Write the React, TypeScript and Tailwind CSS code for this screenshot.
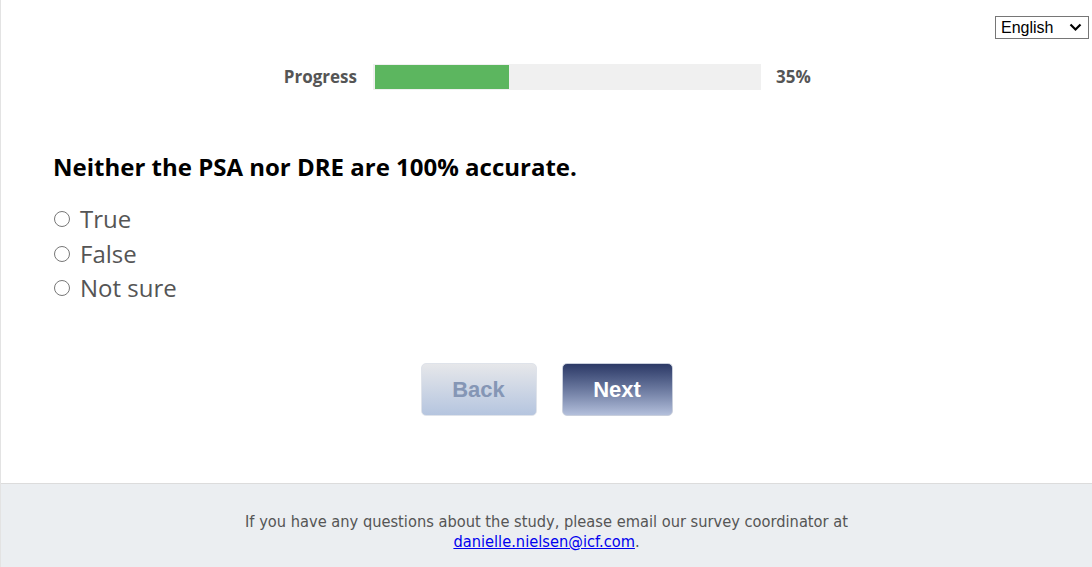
import { useState } from "react";

const options = ["True", "False", "Not sure"];

export default function App() {
  const [answer, setAnswer] = useState<string | null>(null);
  const progress = 35;

  return (
    <div className="flex h-[567px] w-[1092px] flex-col overflow-hidden border-l border-[#e3e3e3] bg-white font-['Open_Sans',sans-serif]">
      <main className="relative flex h-[483px] shrink-0 flex-col">
        <div className="flex justify-end pr-[3px] pt-[16px]">
          <div className="flex h-[23px] w-[94px] items-center justify-between border border-[#767676] bg-white pl-[5px] pr-[6px] font-['Liberation_Sans',Arial,sans-serif] text-[16px] text-black">
            <span>English</span>
            <svg width="13" height="9" viewBox="0 0 13 9" fill="none">
              <path d="M1.5 1.5 6.5 6.5l5-5" stroke="black" strokeWidth="2.2" />
            </svg>
          </div>
        </div>

        <div className="mt-[25px] flex items-center">
          <span className="w-[356px] text-right text-[17px] font-bold text-[#555]">
            Progress
          </span>
          <div className="ml-[16px] flex h-[26px] w-[388px] items-stretch bg-[#f0f0f0] px-[2px] py-[1px]">
            <div className="bg-[#5cb65f]" style={{ width: `${progress}%` }} />
          </div>
          <span className="ml-[15px] text-[17px] font-bold text-[#555]">
            {progress}%
          </span>
        </div>

        <div className="mt-[61px] pl-[52px]">
          <h1 className="text-[24px] font-bold leading-[32px] text-black">
            Neither the PSA nor DRE are 100% accurate.
          </h1>
          <div className="mt-[19px] flex flex-col">
            {options.map((o) => (
              <label
                key={o}
                className="flex h-[34.5px] cursor-pointer items-center gap-[10px] text-[24px] text-[#555]"
                onClick={() => setAnswer(o)}
              >
                <span className="ml-[1px] flex h-[16px] w-[16px] items-center justify-center rounded-full border border-[#777] bg-white">
                  {answer === o ? (
                    <span className="h-[8px] w-[8px] rounded-full bg-[#555]" />
                  ) : null}
                </span>
                {o}
              </label>
            ))}
          </div>
        </div>

        <div className="mt-[57px] flex justify-center gap-[25px]">
          <button className="h-[53px] w-[116px] rounded-[5px] border border-[#dfe3ea] bg-gradient-to-b from-[#e6e7ea] to-[#b5c5df] font-['Liberation_Sans',Arial,sans-serif] text-[22px] font-bold text-[#8596b5]">
            Back
          </button>
          <button className="h-[53px] w-[111px] rounded-[5px] border border-[#c9cfdc] bg-gradient-to-b from-[#2c3966] to-[#b3bfdb] font-['Liberation_Sans',Arial,sans-serif] text-[22px] font-bold text-white">
            Next
          </button>
        </div>
      </main>

      <footer className="flex flex-1 flex-col items-center border-t border-[#dcdcdc] bg-[#ebeef1] pt-[28px] text-center font-['DejaVu_Sans',sans-serif] text-[16.3px] leading-[20px] text-[#555] [font-stretch:condensed]">
        <p>
          If you have any questions about the study, please email our survey coordinator at
          <br />
          <a href="#" className="text-[#0000ee] underline">
            danielle.nielsen@icf.com
          </a>
          .
        </p>
      </footer>
    </div>
  );
}
